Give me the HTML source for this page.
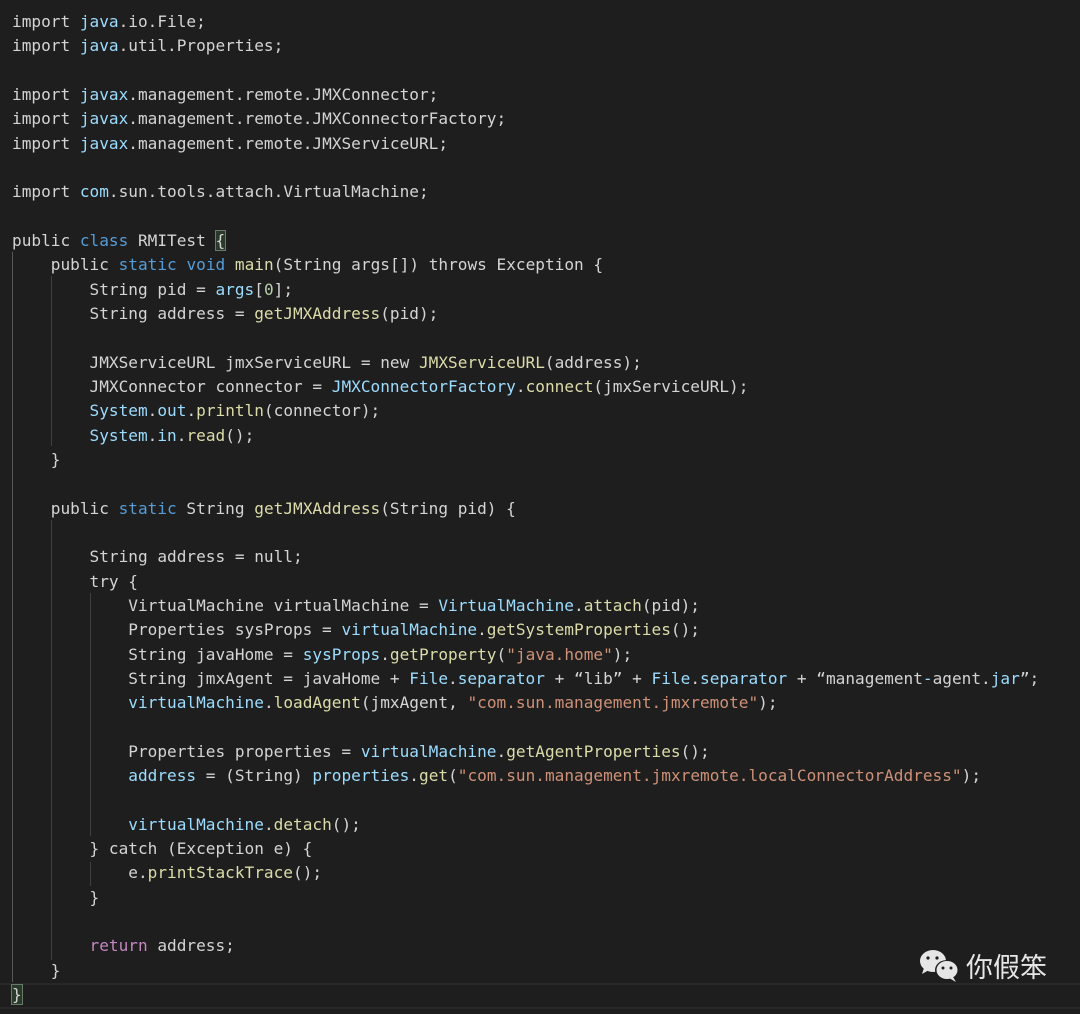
<!DOCTYPE html>
<html><head><meta charset="utf-8"><style>
html,body{margin:0;padding:0;background:#1e1e1e;width:1080px;height:1014px;overflow:hidden;position:relative}
pre{position:absolute;left:12px;top:10px;margin:0;font-family:"DejaVu Sans Mono","Liberation Mono",monospace;font-size:16.1px;line-height:24.33px;color:#d4d4d4;white-space:pre}
.v{color:#9cdcfe}.f{color:#dcdcaa}.k{color:#569cd6}.s{color:#ce9178}.n{color:#b5cea8}.p{color:#c586c0}
.g{position:absolute;width:1px;background:#404040}
.hl{position:absolute;left:0;top:983px;width:1080px;height:22px;border-top:2px solid #282828;border-bottom:2px solid #282828}
.br{outline:1px solid #6a7a6a;background:#2a3a2a}
.wm{position:absolute;left:918px;top:946px;font-family:"Noto Sans CJK SC",sans-serif;font-size:27px;color:#e6e6e6}
</style></head><body>
<div class="hl"></div>
<div class="g" style="left:12px;top:252px;height:730px;background:#585858"></div>
<div class="g" style="left:51px;top:276px;height:170px"></div>
<div class="g" style="left:51px;top:520px;height:440px"></div>
<div class="g" style="left:90px;top:593px;height:243px"></div>
<div class="g" style="left:90px;top:862px;height:24px"></div>
<pre>import <span class="v">java</span>.io.File;
import <span class="v">java</span>.util.Properties;

import <span class="v">javax</span>.management.remote.JMXConnector;
import <span class="v">javax</span>.management.remote.JMXConnectorFactory;
import <span class="v">javax</span>.management.remote.JMXServiceURL;

import <span class="v">com</span>.sun.tools.attach.VirtualMachine;

public <span class="k">class</span> RMITest <span class="br">{</span>
    public <span class="k">static</span> <span class="k">void</span> <span class="f">main</span>(String args[]) throws Exception {
        String pid = <span class="v">args</span>[<span class="n">0</span>];
        String address = <span class="f">getJMXAddress</span>(pid);

        JMXServiceURL jmxServiceURL = new <span class="f">JMXServiceURL</span>(address);
        JMXConnector connector = <span class="v">JMXConnectorFactory</span>.<span class="f">connect</span>(jmxServiceURL);
        <span class="v">System</span>.<span class="v">out</span>.<span class="f">println</span>(connector);
        <span class="v">System</span>.<span class="v">in</span>.<span class="f">read</span>();
    }

    public <span class="k">static</span> String <span class="f">getJMXAddress</span>(String pid) {

        String address = null;
        try {
            VirtualMachine virtualMachine = <span class="v">VirtualMachine</span>.<span class="f">attach</span>(pid);
            Properties sysProps = <span class="v">virtualMachine</span>.<span class="f">getSystemProperties</span>();
            String javaHome = <span class="v">sysProps</span>.<span class="f">getProperty</span>(<span class="s">"java.home"</span>);
            String jmxAgent = javaHome + <span class="v">File</span>.<span class="v">separator</span> + “lib” + <span class="v">File</span>.<span class="v">separator</span> + “management<span class="v">-</span>agent.<span class="v">jar</span>”;
            <span class="v">virtualMachine</span>.<span class="f">loadAgent</span>(jmxAgent, <span class="s">"com.sun.management.jmxremote"</span>);

            Properties properties = <span class="v">virtualMachine</span>.<span class="f">getAgentProperties</span>();
            <span class="v">address</span> = (String) <span class="v">properties</span>.<span class="f">get</span>(<span class="s">"com.sun.management.jmxremote.localConnectorAddress"</span>);

            <span class="v">virtualMachine</span>.<span class="f">detach</span>();
        } catch (Exception e) {
            e.<span class="f">printStackTrace</span>();
        }

        <span class="p">return</span> address;
    }
<span class="br">}</span></pre>
<svg style="position:absolute;left:918px;top:948px" width="46" height="36" viewBox="0 0 46 36">
<ellipse cx="15" cy="13" rx="13" ry="11" fill="#e6e6e6"/>
<path d="M6 20 L4 26 L11 22Z" fill="#e6e6e6"/>
<ellipse cx="29" cy="22" rx="12" ry="10" fill="#1e1e1e"/>
<ellipse cx="29" cy="22" rx="10.5" ry="9" fill="#e6e6e6"/>
<path d="M35 29 L38 34 L31 30Z" fill="#e6e6e6"/>
<circle cx="10" cy="10" r="1.6" fill="#1e1e1e"/><circle cx="19" cy="10" r="1.6" fill="#1e1e1e"/>
<circle cx="25" cy="20" r="1.5" fill="#1e1e1e"/><circle cx="33" cy="20" r="1.5" fill="#1e1e1e"/>
</svg>
<div class="wm" style="left:966px">你假笨</div>
</body></html>
